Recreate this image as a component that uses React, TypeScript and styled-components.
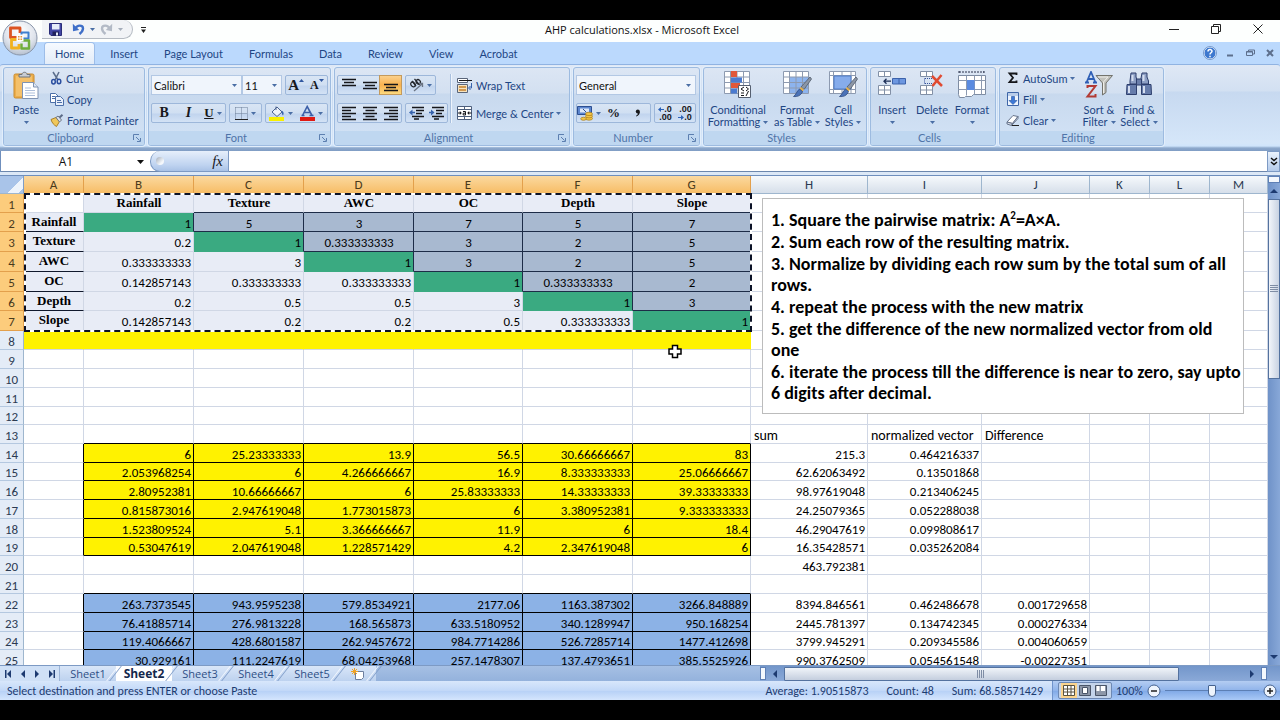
import React from "react";
import styled, { createGlobalStyle, css } from "styled-components";

const UI_FONT = 'Lato, "Open Sans", sans-serif';
const TITLE_FONT = '"Open Sans", "Noto Sans", sans-serif';
const CELL_FONT = 'Carlito, Lato, sans-serif';
const INK = "#1e4684";
const GRID = "#d0d7e5";

const GlobalStyle = createGlobalStyle`
  * { box-sizing: border-box; }
  body { margin: 0; background: #000; font-family: ${UI_FONT}; font-size: 11px; color: ${INK}; }
  button, input, select { font: inherit; color: inherit; margin: 0; padding: 0; border: 0; background: none; outline: none; }
  svg { display: block; flex: none; }
`;

const Screen = styled.div`
  height: 100vh;
  padding: 20px 0;
  display: flex;
  flex-direction: column;
`;

const Window = styled.div`
  flex: 1;
  min-height: 0;
  display: flex;
  flex-direction: column;
  position: relative;
  background: #bbd9fd;
`;

/* ---------- title bar ---------- */

const TitleBar = styled.header`
  flex: none;
  height: 22px;
  display: grid;
  grid-template-columns: 1fr auto 1fr;
  align-items: start;
  background: #fdfffe;
`;

const Title = styled.h1`
  margin: 0;
  padding-left: 4px;
  font-family: ${TITLE_FONT};
  font-size: 11px;
  line-height: 20px;
  font-weight: 400;
  color: #111;
`;

const QuickAccess = styled.div`
  display: flex;
  align-items: center;
  padding-left: 42px;
  gap: 8px;
`;

const QuickPill = styled.div`
  width: 91px;
  height: 19px;
  display: flex;
  align-items: center;
  gap: 5px;
  padding-left: 7px;
  background: #f1f3f6;
  border: 1px solid #b4bac2;
  border-top: 0;
  border-left: 0;
  border-radius: 0 10px 10px 0;
`;

const OfficeButton = styled.button`
  position: absolute;
  left: 2px;
  top: 0;
  z-index: 3;
  width: 36px;
  height: 36px;
`;

const WindowButtons = styled.div`
  display: flex;
  justify-content: flex-end;
  padding-right: 1px;
  color: #222;
`;

const IconButton = styled.button<{ $w?: number }>`
  width: ${(p) => p.$w ?? 20}px;
  height: 18px;
  display: flex;
  align-items: center;
  justify-content: center;
`;

/* ---------- ribbon ---------- */

const TabBar = styled.nav`
  flex: none;
  height: 22px;
  display: flex;
  align-items: flex-end;
  gap: 6px;
  padding-left: 45px;
  background: #bbd9fd;
`;

const RibbonTab = styled.button<{ $active?: boolean }>`
  height: 21px;
  padding: 0 10px;
  border-radius: 3px 3px 0 0;
  ${(p) =>
    p.$active &&
    css`
      background: linear-gradient(#f6faff, #e3ecf8);
      box-shadow: 0 0 0 1px #9dbde8;
      clip-path: inset(-1px -1px 0 -1px);
    `}
`;

const DocButtons = styled.div`
  margin-left: auto;
  display: flex;
  align-items: center;
  height: 22px;
  color: #5d7ba6;
`;

const Ribbon = styled.section`
  flex: none;
  height: 87px;
  display: flex;
  gap: 3px;
  padding: 2px 0 4px 3px;
  border-top: 1px solid #90b3e2;
  border-radius: 3px 3px 0 0;
  background: linear-gradient(#dfe8f5 0, #d2e0f2 26px, #c7d9f0 27px, #d5e6f9 78px, #cfe4fb 81px, #8ea9cc 83px, #7f9cc4 100%);
`;

const GroupBox = styled.section<{ $w: number }>`
  width: ${(p) => p.$w}px;
  height: 79px;
  flex: none;
  display: flex;
  flex-direction: column;
  border: 1px solid #9dbbe0;
  border-radius: 3px;
  box-shadow: 0 0 0 1px #e2eefb;
  background: linear-gradient(#dce6f4 0, #d3e0f1 25px, #c8d9ee 26px, #d3e3f6 100%);
`;

const GroupBody = styled.div`
  flex: 1;
  min-height: 0;
  display: flex;
`;

const Caption = styled.div`
  height: 14px;
  flex: none;
  display: grid;
  grid-template-columns: 7px 1fr 14px;
  align-items: center;
  justify-items: center;
  line-height: 14px;
  background: #bfd7f0;
  color: #4f74a8;
  border-radius: 0 0 2px 2px;
`;

const Rows = styled.div<{ $pad?: number }>`
  display: flex;
  flex-direction: column;
  gap: 8px;
  padding: 7px ${(p) => p.$pad ?? 2}px 0;
`;

const Row = styled.div<{ $gap?: number }>`
  display: flex;
  gap: ${(p) => p.$gap ?? 3}px;
`;

const ToolSet = styled.div<{ $w: number }>`
  width: ${(p) => p.$w}px;
  height: 20px;
  display: flex;
  align-items: stretch;
  border: 1px solid #9db7da;
  border-radius: 2px;
  background: linear-gradient(#d9e5f4 0, #d0dff2 9px, #c1d4ee 10px, #d3e2f5 100%);
`;

const Tool = styled.button<{ $on?: boolean; $raised?: boolean }>`
  flex: 1;
  min-width: 0;
  display: flex;
  align-items: center;
  justify-content: center;
  gap: ${(p) => (p.$raised ? 0 : 3)}px;
  ${(p) => p.$raised && "> svg { align-self: flex-start; margin-top: 3px; }"}
  ${(p) =>
    p.$on &&
    css`
      background: linear-gradient(#fbd08b, #f9b24f 50%, #fcd97e);
      box-shadow: 0 0 0 1px #c49a5c;
    `}
`;

const Glyph = styled.span<{ $style?: "italic" | "underline"; $size?: number; $light?: boolean }>`
  font-family: "Liberation Serif", serif;
  font-weight: ${(p) => (p.$light ? 400 : 700)};
  font-size: ${(p) => p.$size ?? 13}px;
  line-height: 14px;
  color: #17181c;
  ${(p) => p.$style === "italic" && "font-style: italic;"}
  ${(p) => p.$style === "underline" && "text-decoration: underline;"}
`;

const Picker = styled.label<{ $w: number }>`
  position: relative;
  width: ${(p) => p.$w}px;
  height: 20px;
  border: 1px solid #b3c8e4;
  background: #f0f5fc;
  color: #111;
  select {
    width: 100%;
    height: 18px;
    padding-left: 2px;
    appearance: none;
  }
  svg {
    position: absolute;
    right: 4px;
    top: 8px;
    pointer-events: none;
  }
`;

const Divider = styled.div`
  width: 1px;
  margin: 6px 3px 8px 0;
  background: #a9c0de;
  box-shadow: 1px 0 0 #eef4fc;
`;

const CommandStack = styled.div<{ $w: number; $pad?: number }>`
  width: ${(p) => p.$w}px;
  padding-left: ${(p) => p.$pad ?? 0}px;
  display: flex;
  flex-direction: column;
  gap: 1px;
`;

const Command = styled.button`
  height: 20px;
  display: flex;
  align-items: center;
  gap: 3px;
  padding-left: 2px;
  white-space: nowrap;
`;

const BigCommand = styled.button<{ $w: number }>`
  width: ${(p) => p.$w}px;
  flex: none;
  display: flex;
  flex-direction: column;
  align-items: center;
  padding-top: 3px;
  line-height: 12px;
  white-space: nowrap;
  > svg { margin-bottom: 5px; }
`;

const LabelLine = styled.span`
  height: 12px;
  display: flex;
  align-items: center;
  gap: 3px;
`;

/* ---------- formula bar ---------- */

const FormulaBar = styled.section`
  flex: none;
  height: 24px;
  display: flex;
  align-items: stretch;
  border-bottom: 3px solid #dce8f6;
  background: #fff;
  box-shadow: inset 0 -1px 0 #6c87ad;
`;

const NameBox = styled.label`
  width: 150px;
  display: flex;
  align-items: center;
  gap: 6px;
  border-left: 1px solid #6f8fbd;
  input {
    width: 130px;
    text-align: center;
    color: #111;
    font-family: ${TITLE_FONT};
    font-size: 12px;
  }
`;

const FxArea = styled.div`
  width: 79px;
  display: flex;
  align-items: center;
  justify-content: space-between;
  padding: 0 5px 0 5px;
  border: 1px solid #7d9ac4;
  border-top: 0;
  border-radius: 10px 0 0 10px;
  background: linear-gradient(#e6effb, #bfd3f0 70%, #a9c2e6);
`;

const Knob = styled.span`
  width: 8px;
  height: 8px;
  border-radius: 50%;
  background: linear-gradient(135deg, #a3adba, #f4f7fb 70%);
`;

const FormulaInput = styled.input`
  flex: 1;
  min-width: 0;
`;

const ExpandButton = styled.button`
  width: 13px;
  display: flex;
  align-items: center;
  justify-content: center;
  border: 1px solid #7d9ac4;
  background: linear-gradient(#eaf2fc, #b4cbeb);
`;

/* ---------- sheet ---------- */

const SheetArea = styled.main`
  flex: 1;
  min-height: 0;
  display: flex;
  overflow: hidden;
  background: #fff;
  border-top: 1px solid #6f8fbd;
`;

const GridPane = styled.div`
  flex: 1;
  min-width: 0;
  position: relative;
  overflow: hidden;
`;

const Grid = styled.table`
  width: 100%;
  table-layout: fixed;
  border-collapse: separate;
  border-spacing: 0;
  font-family: ${CELL_FONT};
  font-size: 13px;
  color: #000;
  th, td {
    padding: 0;
    overflow: visible;
    white-space: nowrap;
    line-height: 15px;
  }
  tbody th { padding-top: 2px; }
`;

const ColHead = styled.th<{ $on?: boolean }>`
  height: 18px;
  font-weight: 400;
  color: ${(p) => (p.$on ? "#4a3a1c" : "#2b3a52")};
  border-right: 1px solid ${(p) => (p.$on ? "#e3a04c" : "#9eb6ce")};
  border-bottom: 1px solid ${(p) => (p.$on ? "#e3a04c" : "#9eb6ce")};
  background: ${(p) => (p.$on ? "linear-gradient(#fbd9a0, #f7bd66)" : "linear-gradient(#f6f9fc, #d6dfea)")};
`;

const Corner = styled.th`
  height: 18px;
  border-right: 1px solid #7f9dc6;
  border-bottom: 1px solid #9eb6ce;
  background: linear-gradient(135deg, transparent 60%, #eef4fb 61%, #eef4fb 88%, transparent 89%), #a9c4e9;
`;

const RowHead = styled.th<{ $on?: boolean; $h: number }>`
  height: ${(p) => p.$h}px;
  font-weight: 400;
  color: ${(p) => (p.$on ? "#4a3a1c" : "#2b3a52")};
  border-right: 1px solid ${(p) => (p.$on ? "#e3a04c" : "#9eb6ce")};
  border-bottom: 1px solid ${(p) => (p.$on ? "#e3a04c" : "#b4c8e0")};
  background: ${(p) => (p.$on ? "#fccc7c" : "#e4ecf7")};
`;

const Cell = styled.td<{ $bg: string; $right: string; $bottom: string; $align: string; $label?: boolean }>`
  && { padding: 2px 2px 0 3px; }
  background: ${(p) => p.$bg};
  border-right: 1px solid ${(p) => p.$right};
  border-bottom: 1px solid ${(p) => p.$bottom};
  text-align: ${(p) => p.$align};
  font-size: ${(p) => (p.$align === "left" ? 14 : 13)}px;
  ${(p) =>
    p.$label &&
    css`
      font-family: "Liberation Serif", serif;
      font-weight: 700;
      && { padding-top: 1px; line-height: 16px; vertical-align: top; }
    `}
`;

const CopyMarquee = styled.div`
  position: absolute;
  left: 24px;
  top: 17px;
  width: 728px;
  height: 139px;
  border: 2px solid #fff;
  pointer-events: none;
  &::after {
    content: "";
    position: absolute;
    inset: -2px;
    border: 2px dashed #0c1226;
  }
`;

const Note = styled.aside`
  position: absolute;
  left: 762px;
  top: 22px;
  width: 482px;
  height: 216px;
  padding: 11px 2px 0 8px;
  border: 1px solid #bcbcbc;
  background: #fff;
  font-family: ${CELL_FONT};
  font-size: 18px;
  font-weight: 700;
  line-height: 21px;
  color: #000;
  p { margin: 0 0 1px; }
  sup { font-size: 11px; line-height: 0; vertical-align: 7px; }
`;

const CellCursor = styled.div`
  position: absolute;
  left: 667px;
  top: 167px;
`;

const VScroll = styled.div`
  width: 12px;
  flex: none;
  display: flex;
  flex-direction: column;
  align-items: center;
  background: linear-gradient(90deg, #6f92c8, #88a8d8);
`;

const Splitter = styled.div<{ $vertical?: boolean }>`
  flex: none;
  width: ${(p) => (p.$vertical ? 6 : 12)}px;
  height: ${(p) => (p.$vertical ? 13 : 7)}px;
  border: 1px solid #5f80b5;
  background: #f4f8fd;
`;

const ScrollArrow = styled.button<{ $w: number; $h: number }>`
  flex: none;
  width: ${(p) => p.$w}px;
  height: ${(p) => p.$h}px;
  display: flex;
  align-items: center;
  justify-content: center;
`;

const VThumb = styled.div`
  width: 12px;
  height: 180px;
  display: flex;
  align-items: center;
  justify-content: center;
  border: 1px solid #54729f;
  background: linear-gradient(90deg, #f2f5fa, #c8d2e2);
`;

const Space = styled.div`
  flex: 1;
`;

/* ---------- sheet tabs ---------- */

const TabStrip = styled.footer`
  flex: none;
  height: 16px;
  display: grid;
  grid-template-columns: minmax(0, 760fr) minmax(0, 520fr);
  background: linear-gradient(#a6c0e4, #94b2dc);
  border-top: 1px solid #7d9ac4;
`;

const TabsLeft = styled.div`
  display: flex;
`;

const NavArrows = styled.div`
  width: 60px;
  display: flex;
  padding-left: 2px;
  align-items: center;
  background: #cfe0f6;
  border-right: 1px solid #9cb5d8;
`;

const SheetTab = styled.button<{ $active?: boolean; $w?: number }>`
  position: relative;
  width: ${(p) => p.$w ?? 56}px;
  display: flex;
  align-items: center;
  justify-content: center;
  font-family: ${TITLE_FONT};
  font-size: ${(p) => (p.$active ? 12 : 11)}px;
  line-height: 14px;
  font-weight: ${(p) => (p.$active ? 700 : 400)};
  color: ${(p) => (p.$active ? "#14284c" : "#2e4f86")};
  background: ${(p) => (p.$active ? "#fff" : "linear-gradient(#d9e6f8, #bdd2ef)")};
  &::after {
    content: "";
    position: absolute;
    z-index: 1;
    top: 0;
    right: 0;
    width: 2px;
    height: 15px;
    border-left: 1px solid #f5f9ff;
    border-right: 1px solid #7f9cc8;
    transform: skewX(-38deg);
  }
`;

const HScroll = styled.div`
  display: flex;
  align-items: center;
  background: linear-gradient(#7396ca, #8aa9d8);
`;

const HTrack = styled.div`
  flex: 1;
  display: flex;
`;

const HThumb = styled.div`
  width: 86%;
  height: 14px;
  display: flex;
  align-items: center;
  justify-content: center;
  border: 1px solid #54729f;
  border-radius: 1px;
  background: linear-gradient(#f0f4f9, #c4cede);
`;

/* ---------- status bar ---------- */

const StatusBar = styled.footer`
  flex: none;
  height: 19px;
  display: flex;
  align-items: center;
  padding-left: 7px;
  font-family: ${CELL_FONT};
  font-size: 12px;
  color: #1c3b70;
  background: linear-gradient(#d8e7fb, #c2d8f8 50%, #b6d0f6 51%, #d4e5fd);
`;

const StatusStats = styled.div`
  margin-left: auto;
  display: flex;
  gap: 18px;
  padding-right: 9px;
`;

const ZoomSide = styled.div`
  height: 19px;
  width: 228px;
  display: flex;
  align-items: center;
  justify-content: space-between;
  padding: 0 3px 0 5px;
  border-left: 1px solid #6f93cb;
  background: linear-gradient(#b4cdf2, #8fb3ea 50%, #7fa8e6 51%, #a9c9f6);
`;

const ViewSet = styled.div`
  display: flex;
  padding: 0 2px;
  border: 1px solid #6d88b3;
  border-radius: 2px;
  background: #c3d3ea;
`;

const ViewButton = styled.button<{ $on?: boolean }>`
  width: 16px;
  height: 15px;
  display: flex;
  align-items: center;
  justify-content: center;
  background: ${(p) => (p.$on ? "#fbd48e" : "none")};
`;

const ZoomSlider = styled.label`
  display: flex;
  align-items: center;
  input {
    width: 94px;
    height: 14px;
    margin: 0;
    appearance: none;
    background: linear-gradient(#5c7fb4, #5c7fb4) center / 100% 1px no-repeat;
  }
  input::-webkit-slider-thumb {
    appearance: none;
    width: 8px;
    height: 12px;
    border: 1px solid #45628f;
    border-radius: 1px 1px 4px 4px;
    background: #eef4fc;
  }
`;

/* ---------- icons ---------- */

const Caret = ({ up = false, color = "#4a6ea5", size = 5 }: { up?: boolean; color?: string; size?: number }) => (
  <svg width={size} height={size > 6 ? 4 : 3} viewBox="0 0 6 3" preserveAspectRatio="none">
    <path d={up ? "M0 3L3 0L6 3Z" : "M0 0H6L3 3Z"} fill={color} />
  </svg>
);

const Launcher = () => (
  <svg width="8" height="8" viewBox="0 0 8 8" fill="none" stroke="#5c7fb0">
    <path d="M.5 6V.5H6M3 3l3.500 3.500M7.500 4v3.500H4" />
  </svg>
);

const OfficeLogo = () => (
  <svg width="36" height="36" viewBox="0 0 36 36">
    <defs>
      <radialGradient id="orb" cx=".5" cy=".3" r=".75">
        <stop offset="0" stopColor="#fff" />
        <stop offset=".6" stopColor="#dfe4ec" />
        <stop offset="1" stopColor="#aeb9c9" />
      </radialGradient>
    </defs>
    <circle cx="18" cy="18" r="17" fill="url(#orb)" stroke="#8996aa" />
    <g fill="none" strokeLinejoin="round">
      <path d="M17 17.500H8.500V8H18V13" stroke="#dc5423" strokeWidth="2.800" />
      <path d="M19.500 15.500V12.500H26.500V18.500H20.500" stroke="#3f7fcf" strokeWidth="2" />
      <path d="M16.500 19.500H9.500V28H17V24" stroke="#f2b21f" strokeWidth="2.800" />
      <path d="M19.500 20.500H27V28.500H19.500V23.500" stroke="#6fae3c" strokeWidth="2.400" />
    </g>
    <path d="M14.500 14.500h7v7h-7z" fill="#fff" />
    <path d="M16 16h1.600v1.600H16zM18.500 16h1.600v1.600h-1.600zM16 18.500h1.600v1.600H16zM18.500 18.500h1.600v1.600h-1.600z" fill="#e8973c" />
  </svg>
);

const SaveIcon = () => (
  <svg width="13" height="13" viewBox="0 0 13 13">
    <path d="M.5 .5h12v12H2L.5 11Z" fill="#4347a5" stroke="#2a2d78" />
    <path d="M3 1h7.500v5.500H3z" fill="#e6ecfa" />
    <path d="M3.500 8.500H10V12.500H3.500z" fill="#20225c" />
    <path d="M7 9.500h2v3H7z" fill="#e6ecfa" />
  </svg>
);

const UndoIcon = ({ color, flip }: { color: string; flip?: boolean }) => (
  <svg width="13" height="12" viewBox="0 0 13 12">
    <g transform={flip ? "translate(13 0) scale(-1 1)" : undefined}>
      <path d="M3.500 5.500C5 1.800 11 1.500 11 5.500c0 2-1.200 3.600-3.500 5.500" fill="none" stroke={color} strokeWidth="2.400" />
      <path d="M.8 .8l.2 7.500 6.200-1.200Z" fill={color} />
    </g>
  </svg>
);

const PasteIcon = () => (
  <svg width="28" height="28" viewBox="0 0 28 28">
    <rect x="2" y="3" width="20" height="24" rx="1.500" fill="#ecae4c" stroke="#c98a2c" />
    <path d="M4 5h16v20H4z" fill="#f4c06a" />
    <path d="M7 6V3.500h3C10 .5 15 .5 15 3.500h3V6Z" fill="#c9cdd3" stroke="#6f747c" />
    <path d="M10.500 11.500h11l4.500 4.500v11.500H10.500z" fill="#fff" stroke="#7f93b3" />
    <path d="M21.500 11.500V16H26" fill="#dfe8f5" stroke="#7f93b3" />
    <path d="M13 17h6M13 19.500h10M13 22h10M13 24.500h10" stroke="#aebfda" />
  </svg>
);

const CutIcon = () => (
  <svg width="13" height="14" viewBox="0 0 13 14" fill="none">
    <path d="M3 1l5 8M9 1L5 9" stroke="#5c6e8c" strokeWidth="1.500" />
    <ellipse cx="3.500" cy="10.800" rx="1.800" ry="2.200" stroke="#2b4fa0" strokeWidth="1.500" />
    <ellipse cx="9" cy="10.500" rx="1.800" ry="2.200" stroke="#2b4fa0" strokeWidth="1.500" />
  </svg>
);

const CopyIcon = () => (
  <svg width="14" height="13" viewBox="0 0 14 13" stroke="#4c6fa8">
    <path d="M.5 .5h5l2.500 2.500v6.500H.5z" fill="#fff" />
    <path d="M2 3.500h3M2 5.500h4" />
    <path d="M5.500 3.500h5L13.500 6.500v6H5.500z" fill="#e9f0fb" />
    <path d="M7 7.500h4M7 9.500h5" />
  </svg>
);

const PainterIcon = () => (
  <svg width="14" height="13" viewBox="0 0 14 13">
    <path d="M1 5.500l5-2 3.500 4-3 5C4 11 2 9 1 5.500Z" fill="#f0c75a" stroke="#a9812c" />
    <path d="M6 3.500l2-1.500 3.500 4L9.500 8Z" fill="#dfe3ea" stroke="#6b7485" />
    <path d="M9.500 3.500L12.500 .8" stroke="#5b6b87" strokeWidth="2" />
  </svg>
);

const BordersIcon = () => (
  <svg width="13" height="13" viewBox="0 0 13 13" stroke="#6b7c96">
    <path d="M.5 .5h12M.5 6.500h12M.5 .5v12M6.500 .5v12M12.500 .5v12" strokeDasharray="1 1" />
    <path d="M0 12.500h13" stroke="#222" />
  </svg>
);

const FillColorIcon = () => (
  <svg width="16" height="16" viewBox="0 0 16 16">
    <path d="M3 7l5-5 5 5-5 4.500Z" fill="#eef3fa" stroke="#4b6390" />
    <path d="M7 5V1.500" stroke="#4b6390" />
    <path d="M12.500 5.500c2.500 1 2.500 3 1.500 5-1-1-1.500-2.500-1.500-5Z" fill="#3763ad" />
    <path d="M0 12h15v4H0z" fill="#f8f000" />
  </svg>
);

const FontColorIcon = () => (
  <svg width="15" height="16" viewBox="0 0 15 16">
    <path d="M2.500 10.500L7.200 1.500l4.800 9M4.500 7.500h5.500M1.500 10.500h3M9.500 10.500h4" fill="none" stroke="#3c5fa8" strokeWidth="1.600" />
    <path d="M0 12h15v4H0z" fill="#e01a14" />
  </svg>
);

const BARS: Record<string, string> = {
  top: "M0 1.500h14M2 4.500h10M0 7.500h14",
  middle: "M0 4.500h14M2 7.500h10M0 10.500h14",
  bottom: "M0 6.500h14M2 9.500h10M0 12.500h14",
  left: "M0 1.500h14M0 4.500h9M0 7.500h14M0 10.500h9M0 13.500h14",
  center: "M0 1.500h14M2.500 4.500h9M0 7.500h14M2.500 10.500h9M0 13.500h14",
  right: "M0 1.500h14M5 4.500h9M0 7.500h14M5 10.500h9M0 13.500h14",
};

const BarsIcon = ({ kind }: { kind: string }) => (
  <svg width="14" height="15" viewBox="0 0 14 15">
    <path d={BARS[kind]} stroke="#15161a" strokeWidth="1.500" />
  </svg>
);

const IndentIcon = ({ out }: { out?: boolean }) => (
  <svg width="15" height="14" viewBox="0 0 15 14">
    <path d="M3 1.500h12M7 4.500h8M7 7.500h6M3 10.500h12M5 13h5" stroke="#15161a" strokeWidth="1.500" />
    <path d={out ? "M0 6.500L3.500 3.500V9.500Z" : "M5.500 6.500L2 3.500V9.500Z"} fill="#3763ad" />
    <path d={out ? "M3 6.500h3" : "M0 6.500h3"} stroke="#3763ad" strokeWidth="1.500" />
  </svg>
);

const OrientIcon = () => (
  <svg width="15" height="14" viewBox="0 0 15 14" fill="none" stroke="#23262d" strokeWidth="1.300">
    <ellipse cx="4" cy="6.500" rx="2" ry="2.600" transform="rotate(-45 4 6.500)" />
    <path d="M3 3l4 5M5.500 .8l5 6" />
    <ellipse cx="9.200" cy="3.800" rx="2" ry="2.300" transform="rotate(-45 9.200 3.800)" />
    <path d="M5 13l8-7M13.500 9V5.500H10" stroke="#6a7484" />
  </svg>
);

const WrapIcon = () => (
  <svg width="16" height="15" viewBox="0 0 16 15">
    <path d="M.5 .5h10v4H.5z" fill="#fff" stroke="#59657a" />
    <path d="M2 2.500h13" stroke="#15161a" />
    <path d="M.5 6.500h10v8H.5z" fill="#f6e3c0" stroke="#59657a" />
    <path d="M2 9h7M2 12h7" stroke="#c3802b" strokeWidth="1.500" />
    <path d="M14.500 5v5h-2M13.500 8l-2 2 2 2" fill="none" stroke="#3763ad" />
  </svg>
);

const MergeIcon = () => (
  <svg width="16" height="14" viewBox="0 0 16 14">
    <path d="M.5 .5h14v13H.5z" fill="#fff" stroke="#4d5f7d" />
    <path d="M.5 3.500h14M.5 10.500h14M7.500 .5v3M7.500 10.500v3" stroke="#4d5f7d" />
    <path d="M1 7h2.500M11.500 7h3" stroke="#15161a" />
    <path d="M4.800 7L2.800 5v4ZM10.200 7l2-2v4Z" fill="#15161a" />
    <path d="M6 5.500h2.500v3.500H6.200V7.200H8" fill="none" stroke="#15161a" />
  </svg>
);

const CurrencyIcon = () => (
  <svg width="16" height="15" viewBox="0 0 16 15">
    <path d="M.5 .5h14v8H.5z" fill="#5c86cf" stroke="#2d4f91" />
    <path d="M3 2.500h9v4H3z" fill="#dbe7f8" />
    <path d="M6 3l3 3" stroke="#2d4f91" />
    <g fill="#f3c548" stroke="#a97b16" strokeWidth=".7">
      <ellipse cx="12" cy="12.500" rx="3.500" ry="1.700" />
      <ellipse cx="12" cy="10.200" rx="3.500" ry="1.700" />
      <ellipse cx="12" cy="7.900" rx="3.500" ry="1.700" />
      <ellipse cx="6.500" cy="12.800" rx="2.800" ry="1.500" />
    </g>
  </svg>
);

const CommaIcon = () => (
  <svg width="6" height="8" viewBox="0 0 6 8" fill="#17181c">
    <circle cx="2.800" cy="2.500" r="2" />
    <path d="M4.800 2.500C5 5 3.500 6.800 1.200 7.500L1 6.800C2.300 6.200 2.900 5.300 2.800 4Z" />
  </svg>
);

const DecimalText = styled.span`
  display: flex;
  flex-direction: column;
  font-family: "Liberation Sans", sans-serif;
  font-weight: 700;
  font-size: 9px;
  line-height: 8px;
  color: #17181c;
  text-align: right;
  span { display: flex; align-items: center; justify-content: flex-end; }
`;

const TinyArrow = ({ right }: { right?: boolean }) => (
  <svg width="6" height="5" viewBox="0 0 6 5" fill="#2b62b8">
    <path d={right ? "M6 2.500L3 0V2H0V3H3V5Z" : "M0 2.500L3 0V2H6V3H3V5Z"} />
  </svg>
);

const GRID_LINES = "M.5 .5h25v22H.5ZM.5 6h25M.5 11.500h25M.5 17h25M6.500 .5v22M13 .5v22M19.500 .5v22";

const Brush = () => (
  <>
    <path d="M27 6L18 16l3 2.500L28.500 8Z" fill="#8c96a6" stroke="#4e5867" strokeWidth=".8" />
    <path d="M18 16l3 2.500-1.500 2-3-2.500Z" fill="#e3b04d" />
    <path d="M16.500 18l3 2.500c-1.500 4-5 5.500-9 5 2.500-1.500 3-5 6-7.500Z" fill="#4a72b8" stroke="#2d4a80" strokeWidth=".8" />
  </>
);

const ConditionalIcon = () => (
  <svg width="28" height="28" viewBox="0 0 28 28">
    <path d={GRID_LINES} fill="#fff" stroke="#8d9ab0" />
    <path d="M7 0h6v6H7zM7 12h9v5H7z" fill="#e0583a" />
    <path d="M7 6.500h11v5H7zM7 17.500h6v5H7z" fill="#4b7bd0" />
    <path d="M14.500 14.500h12v12h-12z" fill="#fff" stroke="#555f70" />
    <path d="M20 16l-3 2 3 2M17 22h3M17 24.500h3M22 16l2.500 2-2.500 2M22 25l2.500-5" fill="none" stroke="#15161a" />
  </svg>
);

const FormatTableIcon = () => (
  <svg width="29" height="28" viewBox="0 0 29 28">
    <path d={GRID_LINES} fill="#fff" />
    <path d="M6.500 6h19v16.500h-19z" fill="#8db4ee" />
    <path d={GRID_LINES} fill="none" stroke="#8d9ab0" />
    <Brush />
  </svg>
);

const CellStylesIcon = () => (
  <svg width="29" height="28" viewBox="0 0 29 28">
    <path d="M.5 .5h26v22H.5ZM.5 4.500h26M.5 18.500h26M4.500 .5v22M22 .5v22M13 .5v4M13 18.500v4" fill="#fff" stroke="#8d9ab0" />
    <path d="M5 5h17v13H5z" fill="#86aceb" stroke="#4f7cc8" />
    <Brush />
  </svg>
);

const SmallRows = () => (
  <path d="M1.500 .5h12v5h-12zM7.500 .5v5M1.500 14.500h12v9h-12zM7.500 14.500v9M1.500 19h12" fill="#fff" stroke="#8290a6" />
);

const InsertIcon = () => (
  <svg width="30" height="28" viewBox="0 0 30 28">
    <SmallRows />
    <path d="M15.500 7.500h13v5.500h-13zM22 7.500v5.500" fill="#6d97e0" stroke="#3c62ab" />
    <path d="M7 10.200h7M9.500 7.700L7 10.200l2.500 2.500" fill="none" stroke="#1d2f57" strokeWidth="1.300" />
  </svg>
);

const DeleteIcon = () => (
  <svg width="26" height="28" viewBox="0 0 26 28">
    <SmallRows />
    <path d="M6 7.500h8M6 12.500h8M5.500 7.500v5" stroke="#35519a" strokeDasharray="1 1" />
    <path d="M13 5l10 10M22.500 4L13.500 15" stroke="#e04b32" strokeWidth="2.500" />
  </svg>
);

const FormatIcon = () => (
  <svg width="30" height="28" viewBox="0 0 30 28">
    <path d="M2 1h25M2 0v3M27 0v3" stroke="#28314a" strokeDasharray="2 1" />
    <path d="M1.500 4.500h27v19h-12l-2 2h-6l-1 1h-5l-1-3z" fill="#fff" stroke="#7e8ca2" />
    <path d="M1.500 9.500h27M1.500 18.500h27M9.500 4.500v20M17.500 4.500v19M24.500 4.500v19" stroke="#8d9ab0" />
    <path d="M10 9h7.500v10H10z" fill="#5b8be0" />
  </svg>
);

const SigmaIcon = () => (
  <svg width="14" height="12" viewBox="0 0 14 12">
    <path d="M10.500 3V1.500H3.500L7 5.800 3.500 10.200H10.500V8.500" fill="none" stroke="#15161a" strokeWidth="1.800" />
  </svg>
);

const FillIcon = () => (
  <svg width="14" height="14" viewBox="0 0 14 14">
    <path d="M1.500 .5h11v13h-11z" fill="#eef4fd" stroke="#3f66a8" />
    <path d="M2 1h10v3H2z" fill="#b9cdea" />
    <path d="M5.500 4.500h3v4H11L7 12.500 3 8.500h2.500z" fill="#3d78d6" stroke="#2452a0" strokeWidth=".6" />
  </svg>
);

const EraserIcon = () => (
  <svg width="14" height="12" viewBox="0 0 14 12">
    <path d="M1 8L7 1.500 12 2.500 6.500 9.500Z" fill="#fff" stroke="#67748c" />
    <path d="M1 8v2l4.500 1.500 1-2ZM6.500 9.500l-1 2L12 4.500v-2Z" fill="#d7dde8" stroke="#67748c" />
    <path d="M6 11.500h7" stroke="#222" />
  </svg>
);

const SortIcon = () => (
  <svg width="28" height="28" viewBox="0 0 28 28">
    <path d="M11 4.500h16.500L21 12v9.500l-3.500 2.500V12Z" fill="#c2c2bd" stroke="#73736c" />
    <path d="M13 6h10l-4.500 5v11" fill="none" stroke="#eeeeea" />
    <path d="M1.500 11.500L6 1l4.500 10.500M3 8h6M0 11.500h4M8 11.500h4" fill="none" stroke="#2f5fb5" strokeWidth="1.800" />
    <path d="M2.500 17V15H10.500L2.500 25.500H10.500V23" fill="none" stroke="#b23a34" strokeWidth="2" />
  </svg>
);

const FindIcon = () => (
  <svg width="28" height="28" viewBox="0 0 28 28" stroke="#2e3f6d">
    <path d="M6 2h5v4l1.500 4v3H5v-3ZM17 2h5v4l1.500 4v3H15.500v-3Z" fill="#8d9fc4" />
    <path d="M11.500 8h5v6h-5z" fill="#6b7fab" />
    <path d="M2 13.500h9.500v10H1.500zM16.500 13.500H26l.5 10h-10z" fill="#667cab" />
    <path d="M4 15v7M19 15v7M7.500 4v6M18.500 4v6" stroke="#d5def0" strokeWidth="2" />
  </svg>
);

const WhiteCross = () => (
  <svg width="16" height="16" viewBox="0 0 16 16">
    <path d="M5.500 2.500h5v3.500h3.500v5h-3.500v3.500h-5V11H2V6h3.500Z" fill="#fff" stroke="#000" strokeWidth="1.500" />
  </svg>
);

const Arrow = ({ dir, bar }: { dir: "l" | "r" | "u" | "d"; bar?: boolean }) => {
  const d = { l: "M6 0V8L2 4Z", r: "M2 0V8L6 4Z", u: "M0 6H8L4 2Z", d: "M0 2H8L4 6Z" }[dir];
  return (
    <svg width="8" height="8" viewBox="0 0 8 8" fill="#1d3a70">
      <path d={d} />
      {bar && <path d={dir === "l" ? "M0 0h1.500v8H0z" : "M6.500 0H8v8H6.500z"} />}
    </svg>
  );
};

/* ---------- sheet data ---------- */

const COLUMNS = "ABCDEFGHIJKLM".split("");
const COL_WIDTHS = [60, 110, 110, 110, 109, 110, 118, 117, 114, 108, 60, 60];
const ROW_HEIGHTS = [19, 19, 20, 20, 20, 19, 20, 19, 19, 19, 19, 18, 19, 19, 18, 19, 19, 19, 18, 19, 19, 19, 19, 18, 19];

const VALUES: Record<number, string[]> = {
  1: ["", "Rainfall", "Texture", "AWC", "OC", "Depth", "Slope"],
  2: ["Rainfall", "1", "5", "3", "7", "5", "7"],
  3: ["Texture", "0.2", "1", "0.333333333", "3", "2", "5"],
  4: ["AWC", "0.333333333", "3", "1", "3", "2", "5"],
  5: ["OC", "0.142857143", "0.333333333", "0.333333333", "1", "0.333333333", "2"],
  6: ["Depth", "0.2", "0.5", "0.5", "3", "1", "3"],
  7: ["Slope", "0.142857143", "0.2", "0.2", "0.5", "0.333333333", "1"],
  13: ["", "", "", "", "", "", "", "sum", "normalized vector", "Difference"],
  14: ["", "6", "25.23333333", "13.9", "56.5", "30.66666667", "83", "215.3", "0.464216337"],
  15: ["", "2.053968254", "6", "4.266666667", "16.9", "8.333333333", "25.06666667", "62.62063492", "0.13501868"],
  16: ["", "2.80952381", "10.66666667", "6", "25.83333333", "14.33333333", "39.33333333", "98.97619048", "0.213406245"],
  17: ["", "0.815873016", "2.947619048", "1.773015873", "6", "3.380952381", "9.333333333", "24.25079365", "0.052288038"],
  18: ["", "1.523809524", "5.1", "3.366666667", "11.9", "6", "18.4", "46.29047619", "0.099808617"],
  19: ["", "0.53047619", "2.047619048", "1.228571429", "4.2", "2.347619048", "6", "16.35428571", "0.035262084"],
  20: ["", "", "", "", "", "", "", "463.792381"],
  22: ["", "263.7373545", "943.9595238", "579.8534921", "2177.06", "1163.387302", "3266.848889", "8394.846561", "0.462486678", "0.001729658"],
  23: ["", "76.41885714", "276.9813228", "168.565873", "633.5180952", "340.1289947", "950.168254", "2445.781397", "0.134742345", "0.000276334"],
  24: ["", "119.4066667", "428.6801587", "262.9457672", "984.7714286", "526.7285714", "1477.412698", "3799.945291", "0.209345586", "0.004060659"],
  25: ["", "30.929161", "111.2247619", "68.04253968", "257.1478307", "137.4793651", "385.5525926", "990.3762509", "0.054561548", "-0.00227351"],
};

const isSelected = (r: number, c: number) => r >= 1 && r <= 7 && c >= 0 && c <= 6;
const isUpper = (r: number, c: number) => r >= 2 && r <= 6 && c <= 6 && c > r - 1;
const isDiagonal = (r: number, c: number) => r >= 2 && r <= 7 && c === r - 1;
const isBoxed = (r: number, c: number) => c >= 1 && c <= 6 && ((r >= 14 && r <= 19) || r >= 22);

const fillOf = (r: number, c: number) => {
  if (r === 1 && c === 0) return "#fff";
  if (isDiagonal(r, c)) return "#3aaa81";
  if (isUpper(r, c)) return "#a8b9d0";
  if (isSelected(r, c)) return "#e8ecf6";
  if (r === 8 && c <= 6) return "#fff200";
  if (isBoxed(r, c)) return r < 20 ? "#fff200" : "#8cb2e6";
  return "#fff";
};

const rightOf = (r: number, c: number) => {
  if (isBoxed(r, c) || isBoxed(r, c + 1)) return "#000";
  if (isUpper(r, c) || isUpper(r, c + 1)) return "#1d2c47";
  if (isDiagonal(r, c)) return "#3aaa81";
  if (r === 8 && c <= 6) return "#fff200";
  return GRID;
};

const bottomOf = (r: number, c: number) => {
  if (isBoxed(r, c) || isBoxed(r + 1, c)) return "#000";
  if (isUpper(r, c) || isUpper(r + 1, c)) return "#1d2c47";
  if (c === 0 && r >= 2 && r <= 7) return "#10182c";
  if (isDiagonal(r, c)) return "#3aaa81";
  return GRID;
};

const alignOf = (r: number, c: number) => {
  if (r === 1 || (c === 0 && r <= 7) || isUpper(r, c)) return "center";
  return r === 13 ? "left" : "right";
};

const RIBBON_TABS = ["Home", "Insert", "Page Layout", "Formulas", "Data", "Review", "View", "Acrobat"];
const SHEETS = ["Sheet1", "Sheet2", "Sheet3", "Sheet4", "Sheet5"];

const Group = ({ name, width, launcher, children }: { name: string; width: number; launcher?: boolean; children: React.ReactNode }) => (
  <GroupBox $w={width} aria-label={name}>
    <GroupBody>{children}</GroupBody>
    <Caption>
      <span />
      <span>{name}</span>
      {launcher && <Launcher />}
    </Caption>
  </GroupBox>
);

const Big = ({ width, icon, first, second }: { width: number; icon: React.ReactNode; first: string; second?: string }) => (
  <BigCommand $w={width}>
    {icon}
    <LabelLine>{first}</LabelLine>
    <LabelLine>
      {second}
      <Caret />
    </LabelLine>
  </BigCommand>
);

const Sheet = () => (
  <Grid>
    <colgroup>
      <col width={24} />
      {COL_WIDTHS.map((w, i) => (
        <col key={i} width={w} />
      ))}
      <col />
    </colgroup>
    <thead>
      <tr>
        <Corner aria-label="Select all" />
        {COLUMNS.map((name, c) => (
          <ColHead key={name} scope="col" $on={c <= 6}>
            {name}
          </ColHead>
        ))}
      </tr>
    </thead>
    <tbody>
      {ROW_HEIGHTS.map((h, i) => {
        const r = i + 1;
        return (
          <tr key={r}>
            <RowHead scope="row" $on={r <= 7} $h={h}>
              {r}
            </RowHead>
            {COLUMNS.map((name, c) => (
              <Cell
                key={name}
                $bg={fillOf(r, c)}
                $right={rightOf(r, c)}
                $bottom={bottomOf(r, c)}
                $align={alignOf(r, c)}
                $label={r === 1 || (c === 0 && r <= 7)}
              >
                {VALUES[r]?.[c]}
              </Cell>
            ))}
          </tr>
        );
      })}
    </tbody>
  </Grid>
);

export default function App() {
  return (
    <Screen>
      <GlobalStyle />
      <Window>
        <OfficeButton aria-label="Office Button">
          <OfficeLogo />
        </OfficeButton>

        <TitleBar>
          <QuickAccess>
            <QuickPill>
              <button aria-label="Save"><SaveIcon /></button>
              <span />
              <button aria-label="Undo"><UndoIcon color="#3f6fc8" /></button>
              <Caret />
              <button aria-label="Redo"><UndoIcon color="#b3bac6" flip /></button>
              <Caret color="#a5adba" />
            </QuickPill>
            <button aria-label="Customize toolbar">
              <svg width="5" height="6" viewBox="0 0 5 6"><path d="M0 0h5v1H0zM0 2.500h5L2.500 6Z" fill="#222" /></svg>
            </button>
          </QuickAccess>
          <Title>AHP calculations.xlsx - Microsoft Excel</Title>
          <WindowButtons>
            <IconButton $w={42} aria-label="Minimize">
              <svg width="10" height="10" viewBox="0 0 10 10"><path d="M0 5.500h10" stroke="#222" /></svg>
            </IconButton>
            <IconButton $w={42} aria-label="Restore">
              <svg width="10" height="10" viewBox="0 0 10 10" fill="none" stroke="#222"><path d="M.5 2.500h7v7h-7zM2.500 2.500v-2h7v7h-2" /></svg>
            </IconButton>
            <IconButton $w={42} aria-label="Close">
              <svg width="10" height="10" viewBox="0 0 10 10" stroke="#222"><path d="M.5 .5l9 9M9.500 .5l-9 9" /></svg>
            </IconButton>
          </WindowButtons>
        </TitleBar>

        <TabBar>
          {RIBBON_TABS.map((name, i) => (
            <RibbonTab key={name} $active={i === 0}>{name}</RibbonTab>
          ))}
          <DocButtons>
            <IconButton aria-label="Help">
              <svg width="14" height="14" viewBox="0 0 14 14">
                <circle cx="7" cy="7" r="6" fill="#3d78cf" stroke="#e8f1fc" />
                <circle cx="7" cy="7" r="6.500" fill="none" stroke="#5f86bf" strokeWidth=".8" />
                <path d="M5 5.500C5 3 9 3 9 5.300 9 6.800 7 6.800 7 8.500M7 9.800v1.400" fill="none" stroke="#fff" strokeWidth="1.500" />
              </svg>
            </IconButton>
            <IconButton aria-label="Minimize document">
              <svg width="8" height="8" viewBox="0 0 8 8"><path d="M1 6.500h6" stroke="#5d6f8c" strokeWidth="2" /></svg>
            </IconButton>
            <IconButton aria-label="Restore document">
              <svg width="9" height="8" viewBox="0 0 9 8" fill="none" stroke="#5d6f8c"><path d="M.5 2.500h6v4h-6zM2.500 2.500v-1.500h6v4h-2M.5 3h6" /></svg>
            </IconButton>
            <IconButton aria-label="Close document">
              <svg width="8" height="8" viewBox="0 0 8 8" stroke="#5d6f8c" strokeWidth="2"><path d="M1 1l6 6M7 1L1 7" /></svg>
            </IconButton>
          </DocButtons>
        </TabBar>

        <Ribbon>
          <Group name="Clipboard" width={142} launcher>
            <Big width={44} icon={<PasteIcon />} first="Paste" />
            <CommandStack $w={94}>
              <Command><CutIcon /> Cut</Command>
              <Command><CopyIcon /> Copy</Command>
              <Command><PainterIcon /> Format Painter</Command>
            </CommandStack>
          </Group>

          <Group name="Font" width={183} launcher>
            <Rows>
              <Row>
                <Row $gap={0}>
                  <Picker $w={91}>
                    <select aria-label="Font"><option>Calibri</option></select>
                    <Caret />
                  </Picker>
                  <Picker $w={40}>
                    <select aria-label="Font size"><option>11</option></select>
                    <Caret />
                  </Picker>
                </Row>
                <ToolSet $w={43}>
                  <Tool $raised aria-label="Grow font"><Glyph $size={15}>A</Glyph><Caret up color="#2f56a0" /></Tool>
                  <Tool $raised aria-label="Shrink font"><Glyph $size={12}>A</Glyph><Caret color="#2f56a0" /></Tool>
                </ToolSet>
              </Row>
              <Row>
                <ToolSet $w={75}>
                  <Tool><Glyph $size={14}>B</Glyph></Tool>
                  <Tool><Glyph $style="italic" $size={14}>I</Glyph></Tool>
                  <Tool><Glyph $style="underline">U</Glyph> <Caret /></Tool>
                </ToolSet>
                <ToolSet $w={33}>
                  <Tool aria-label="Borders"><BordersIcon /><Caret /></Tool>
                </ToolSet>
                <ToolSet $w={63}>
                  <Tool aria-label="Fill color"><FillColorIcon /><Caret /></Tool>
                  <Tool aria-label="Font color"><FontColorIcon /><Caret /></Tool>
                </ToolSet>
              </Row>
            </Rows>
          </Group>

          <Group name="Alignment" width={236} launcher>
            <Rows>
              <Row>
                <ToolSet $w={65}>
                  <Tool aria-label="Top align"><BarsIcon kind="top" /></Tool>
                  <Tool aria-label="Middle align"><BarsIcon kind="middle" /></Tool>
                  <Tool aria-label="Bottom align" $on><BarsIcon kind="bottom" /></Tool>
                </ToolSet>
                <ToolSet $w={31}>
                  <Tool aria-label="Orientation"><OrientIcon /><Caret /></Tool>
                </ToolSet>
              </Row>
              <Row>
                <ToolSet $w={65}>
                  <Tool aria-label="Align left"><BarsIcon kind="left" /></Tool>
                  <Tool aria-label="Center"><BarsIcon kind="center" /></Tool>
                  <Tool aria-label="Align right"><BarsIcon kind="right" /></Tool>
                </ToolSet>
                <ToolSet $w={43}>
                  <Tool aria-label="Decrease indent"><IndentIcon out /></Tool>
                  <Tool aria-label="Increase indent"><IndentIcon /></Tool>
                </ToolSet>
              </Row>
            </Rows>
            <Divider />
            <Rows $pad={1}>
              <Command><WrapIcon /> Wrap Text</Command>
              <Command><MergeIcon /> Merge &amp; Center <Caret /></Command>
            </Rows>
          </Group>

          <Group name="Number" width={127} launcher>
            <Rows>
              <Picker $w={120}>
                <select aria-label="Number format"><option>General</option></select>
                <Caret />
              </Picker>
              <Row>
                <ToolSet $w={75}>
                  <Tool aria-label="Accounting format"><CurrencyIcon /><Caret /></Tool>
                  <Tool><Glyph $size={13}>%</Glyph></Tool>
                  <Tool aria-label="Comma style"><CommaIcon /></Tool>
                </ToolSet>
                <ToolSet $w={42}>
                  <Tool aria-label="Increase decimal"><DecimalText><span><TinyArrow />.0</span><span>.00</span></DecimalText></Tool>
                  <Tool aria-label="Decrease decimal"><DecimalText><span>.00</span><span><TinyArrow right />.0</span></DecimalText></Tool>
                </ToolSet>
              </Row>
            </Rows>
          </Group>

          <Group name="Styles" width={164}>
            <Big width={68} icon={<ConditionalIcon />} first="Conditional" second="Formatting" />
            <Big width={50} icon={<FormatTableIcon />} first="Format" second="as Table" />
            <Big width={42} icon={<CellStylesIcon />} first="Cell" second="Styles" />
          </Group>

          <Group name="Cells" width={126}>
            <Big width={42} icon={<InsertIcon />} first="Insert" />
            <Big width={38} icon={<DeleteIcon />} first="Delete" />
            <Big width={42} icon={<FormatIcon />} first="Format" />
          </Group>

          <Group name="Editing" width={165}>
            <CommandStack $w={79} $pad={4}>
              <Command><SigmaIcon /> AutoSum <Caret /></Command>
              <Command><FillIcon /> Fill <Caret /></Command>
              <Command><EraserIcon /> Clear <Caret /></Command>
            </CommandStack>
            <Big width={40} icon={<SortIcon />} first="Sort &" second="Filter" />
            <Big width={40} icon={<FindIcon />} first="Find &" second="Select" />
          </Group>
        </Ribbon>

        <FormulaBar>
          <NameBox>
            <input aria-label="Name box" defaultValue="A1" />
            <Caret color="#111" size={7} />
          </NameBox>
          <FxArea>
            <Knob />
            <Glyph $style="italic" $size={15} $light>fx</Glyph>
          </FxArea>
          <FormulaInput aria-label="Formula" />
          <ExpandButton aria-label="Expand formula bar">
            <svg width="8" height="9" viewBox="0 0 8 9" fill="none" stroke="#111" strokeWidth="1.500"><path d="M1 1l3 2.500L7 1M1 5l3 2.500L7 5" /></svg>
          </ExpandButton>
        </FormulaBar>

        <SheetArea>
          <GridPane>
            <Sheet />
            <CopyMarquee />
            <Note>
              <p>1. Square the pairwise matrix: A<sup>2</sup>=A×A.</p>
              <p>2. Sum each row of the resulting matrix.</p>
              <p>3. Normalize by dividing each row sum by the total sum of all rows.</p>
              <p>4. repeat the process with the new matrix</p>
              <p>5. get the difference of the new normalized vector from old one</p>
              <p>6. iterate the process till the difference is near to zero, say upto 6 digits after decimal.</p>
            </Note>
            <CellCursor><WhiteCross /></CellCursor>
          </GridPane>
          <VScroll>
            <Splitter />
            <ScrollArrow $w={12} $h={16} aria-label="Scroll up"><Arrow dir="u" /></ScrollArrow>
            <VThumb>
              <svg width="8" height="8" viewBox="0 0 8 8" stroke="#7f8da5"><path d="M0 .5h8M0 2.500h8M0 4.500h8M0 6.500h8" /></svg>
            </VThumb>
            <Space />
            <ScrollArrow $w={12} $h={16} aria-label="Scroll down"><Arrow dir="d" /></ScrollArrow>
          </VScroll>
        </SheetArea>

        <TabStrip>
          <TabsLeft>
            <NavArrows>
              <ScrollArrow $w={14} $h={14} aria-label="First sheet"><Arrow dir="l" bar /></ScrollArrow>
              <ScrollArrow $w={14} $h={14} aria-label="Previous sheet"><Arrow dir="l" /></ScrollArrow>
              <ScrollArrow $w={14} $h={14} aria-label="Next sheet"><Arrow dir="r" /></ScrollArrow>
              <ScrollArrow $w={14} $h={14} aria-label="Last sheet"><Arrow dir="r" bar /></ScrollArrow>
            </NavArrows>
            {SHEETS.map((name, i) => (
              <SheetTab key={name} $active={i === 1}>{name}</SheetTab>
            ))}
            <SheetTab $w={36} aria-label="Insert worksheet">
              <svg width="14" height="12" viewBox="0 0 14 12">
                <path d="M4.500 3.500h8v6l-2 2h-6z" fill="#fff" stroke="#6d7f9f" />
                <path d="M3.500 0v7M0 3.500h7M1 1l5 5M6 1L1 6" stroke="#f0a326" />
              </svg>
            </SheetTab>
          </TabsLeft>
          <HScroll>
            <Splitter $vertical />
            <ScrollArrow $w={18} $h={14} aria-label="Scroll left"><Arrow dir="l" /></ScrollArrow>
            <HTrack>
              <HThumb>
                <svg width="8" height="8" viewBox="0 0 8 8" stroke="#7f8da5"><path d="M.5 0v8M2.500 0v8M4.500 0v8M6.500 0v8" /></svg>
              </HThumb>
            </HTrack>
            <ScrollArrow $w={18} $h={14} aria-label="Scroll right"><Arrow dir="r" /></ScrollArrow>
            <Splitter $vertical />
            <ScrollArrow as="span" $w={13} $h={14} />
          </HScroll>
        </TabStrip>

        <StatusBar>
          <span>Select destination and press ENTER or choose Paste</span>
          <StatusStats>
            <span>Average: 1.90515873</span>
            <span>Count: 48</span>
            <span>Sum: 68.58571429</span>
          </StatusStats>
          <ZoomSide>
            <ViewSet>
              <ViewButton $on aria-label="Normal view">
                <svg width="12" height="11" viewBox="0 0 12 11"><path d="M.5 .5h11v10H.5zM.5 4h11M.5 7h11M4.500 .5v10M8 .5v10" fill="#fff" stroke="#5a5340" /></svg>
              </ViewButton>
              <ViewButton aria-label="Page layout view">
                <svg width="12" height="11" viewBox="0 0 12 11"><path d="M.5 .5h11v10H.5z" fill="#8d97a8" stroke="#4a5568" /><path d="M3.500 2.500h5v6h-5z" fill="#fff" stroke="#4a5568" /></svg>
              </ViewButton>
              <ViewButton aria-label="Page break view">
                <svg width="12" height="11" viewBox="0 0 12 11"><path d="M.5 .5h11v10H.5z" fill="#8d97a8" stroke="#4a5568" /><path d="M1.500 1h3v5h-3zM6 1h4v5H6z" fill="#fff" /></svg>
              </ViewButton>
            </ViewSet>
            <span>100%</span>
            <button aria-label="Zoom out">
              <svg width="14" height="14" viewBox="0 0 14 14"><circle cx="7" cy="7" r="6" fill="#eef4fc" stroke="#45628f" /><path d="M4 7h6" stroke="#222" strokeWidth="1.500" /></svg>
            </button>
            <ZoomSlider>
              <input type="range" aria-label="Zoom" min={0} max={100} defaultValue={50} />
            </ZoomSlider>
            <button aria-label="Zoom in">
              <svg width="14" height="14" viewBox="0 0 14 14"><circle cx="7" cy="7" r="6" fill="#eef4fc" stroke="#45628f" /><path d="M4 7h6M7 4v6" stroke="#222" strokeWidth="1.500" /></svg>
            </button>
          </ZoomSide>
        </StatusBar>
      </Window>
    </Screen>
  );
}
